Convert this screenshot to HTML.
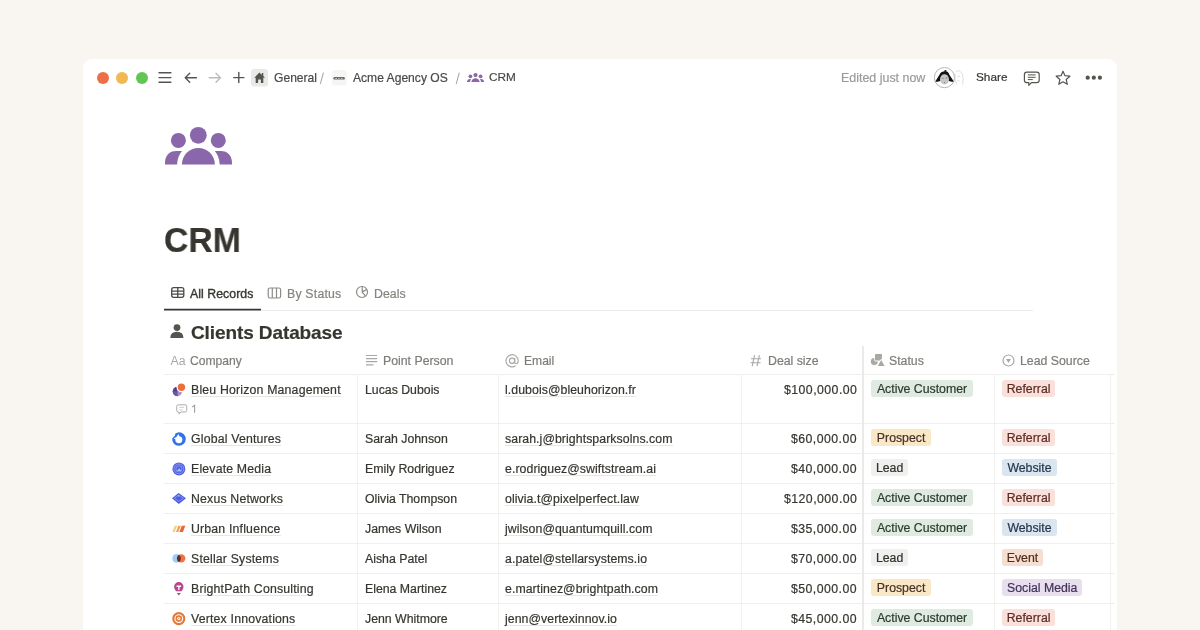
<!DOCTYPE html>
<html><head><meta charset="utf-8">
<style>
*{box-sizing:border-box}
html,body{margin:0;padding:0}
body{width:1200px;height:630px;overflow:hidden;position:relative;background:#F9F6F1;font-family:"Liberation Sans",sans-serif;color:#37352F}
.abs{position:absolute}
.win{position:absolute;left:83px;top:59px;width:1034px;height:620px;background:#fff;border-radius:9px}
.t{position:absolute;white-space:nowrap;line-height:1;will-change:transform;-webkit-text-stroke:0.2px currentColor}
.dot{position:absolute;width:12px;height:12px;border-radius:50%}
.hl{position:absolute;height:1px;background:#EFEFEE}
.vl{position:absolute;width:1px;background:#F1F1F0}
.cell{position:absolute;font-size:12.3px;white-space:nowrap;line-height:1;color:#37352F}
.co{display:inline-block;height:14px;background:linear-gradient(#E6E6E4,#E6E6E4) no-repeat 0 11.6px/100% 1px}
.tag{position:absolute;height:17px;border-radius:3px;font-size:12.3px;line-height:19px;padding:0;text-align:center;white-space:nowrap;will-change:transform;letter-spacing:0px;-webkit-text-stroke:0.2px currentColor}
.g{background:#DFEBE0;color:#2C3A30}
.y{background:#F8E8C6;color:#47302A}
.n{background:#F0F0EE;color:#32302C}
.r{background:#F9E0DB;color:#5A2A22}
.b{background:#D9E6F0;color:#26364A}
.o{background:#F6DFD0;color:#4D2E1F}
.p{background:#E8DFEE;color:#40315A}
.hd{position:absolute;font-size:12.3px;color:#7D7C78;white-space:nowrap;line-height:1}
</style></head><body>
<div class="win"></div>

<!-- traffic lights -->
<div class="dot" style="left:97px;top:72px;background:#EC6F48"></div>
<div class="dot" style="left:116px;top:72px;background:#F1B854"></div>
<div class="dot" style="left:135.5px;top:72px;background:#62C654"></div>

<!-- nav icons -->
<svg class="abs" style="left:0;top:0" width="1200" height="100" viewBox="0 0 1200 100">
  <g stroke="#55544F" stroke-width="1.4" fill="none" stroke-linecap="round">
    <path d="M159 72.7H170.9M159 77.6H170.9M159 82.25H170.9"/>
    <path d="M196.4 77.7H185.6M189.7 73.2L185.3 77.7L189.7 82.3"/>
  </g>
  <g stroke="#BDBCB8" stroke-width="1.4" fill="none" stroke-linecap="round">
    <path d="M209.2 77.7H220.1M216 73.2L220.4 77.7L216 82.3"/>
  </g>
  <g stroke="#55544F" stroke-width="1.4" fill="none" stroke-linecap="round">
    <path d="M238.8 72.5V82.6M233.7 77.6H243.9"/>
  </g>
  <rect x="251" y="69" width="17" height="17.5" rx="3" fill="#E9E9E7"/>
  <path d="M259.4 72.6L254.3 77.7H255.7V82.9H258.1V79.4H260.9V82.9H263.3V77.7H264.9L263.3 76.1V73.1H261.8V74.9Z" fill="#55544F"/>
  <rect x="331.8" y="69.9" width="15" height="15.5" rx="3.5" fill="#F5F5F4"/>
  <g fill="#3A3936"><rect x="333.4" y="77" width="11.4" height="2.6" rx="1.2" opacity="0.75"/></g>
  <g fill="#fff"><rect x="335.6" y="77.9" width="1" height="1"/><rect x="338.4" y="77.9" width="1" height="1"/><rect x="341.3" y="77.9" width="1" height="1"/></g>
</svg>

<div class="t" style="left:274px;top:72.3px;font-size:12.1px;color:#4A4945">General</div>
<div class="t" style="left:352.8px;top:72.3px;font-size:12.1px;color:#4A4945">Acme Agency OS</div>
<svg class="abs" style="left:0;top:60px" width="480" height="30" viewBox="0 60 480 30"><path d="M323.3 73L320.4 83.6M459.2 73L456.3 83.6" stroke="#ABAAA6" stroke-width="1.05" stroke-linecap="round"/></svg>
<svg class="abs" style="left:466.7px;top:72.9px" width="17.3" height="9.4" viewBox="0 0 68 37.4" preserveAspectRatio="none">
  <g fill="#8A67AB">
  <circle cx="33.4" cy="8.3" r="8.3"/><circle cx="13.5" cy="13.4" r="7.4"/><circle cx="53.4" cy="13.4" r="7.4"/>
  <path d="M17 37.4A16.5 16.5 0 0 1 50 37.4Z"/>
  <path d="M0 37.4Q0 24 12 24H16Q12 30 12 37.4Z"/>
  <path d="M67 37.4Q67 24 55 24H51Q55 30 55 37.4Z"/>
  </g>
</svg>
<div class="t" style="left:488.8px;top:72.1px;font-size:11.8px;color:#4A4945">CRM</div>

<div class="t" style="left:841px;top:72px;font-size:12.45px;color:#9B9A97">Edited just now</div>
<!-- avatars -->
<svg class="abs" style="left:920px;top:60px" width="60" height="34" viewBox="920 60 60 34">
  <circle cx="958.5" cy="77.6" r="9.4" fill="#fff"/>
  <path d="M955.8 71.2Q959.8 69.6 962.3 73.5Q963.8 78 962.6 84.5M955.2 73.5Q953.8 78 956.8 84.5M957.2 76.8Q958.6 75.8 960 76.8M957.6 80.8H959.6" fill="none" stroke="#DADAD8" stroke-width="0.9"/>
  <circle cx="944.4" cy="77.6" r="10.1" fill="#fff" stroke="#A3A3A0" stroke-width="0.8"/>
  <path d="M945.3 71.2Q948.3 71.3 949.2 74.4Q951.6 78 953.8 81.5Q951 82.1 948.6 80.8L940.4 80.8Q938 82.1 935.3 81.4Q937.4 78 939.6 74.4Q941 71.2 945.3 71.2Z" fill="#121212"/>
  <circle cx="945.4" cy="71" r="1.1" fill="#121212"/>
  <ellipse cx="944.5" cy="79.4" rx="4.5" ry="5.1" fill="#C6C6C4"/>
  <path d="M942.2 78.3H943.6M945.7 78H947.2M944 82.3Q944.6 82.8 945.2 82.3" stroke="#666" stroke-width="0.8" fill="none"/>
</svg>
<div class="t" style="left:976.2px;top:72.4px;font-size:11.8px;color:#37352F">Share</div>
<svg class="abs" style="left:1020px;top:66px" width="90" height="24" viewBox="1020 66 90 24">
  <g fill="none" stroke="#55544F" stroke-width="1.2" stroke-linejoin="round">
    <path d="M1026.8 72.1H1036.8Q1039.2 72.1 1039.2 74.5V80.2Q1039.2 82.6 1036.8 82.6H1031.4L1028.8 85.3V82.6H1026.8Q1024.4 82.6 1024.4 80.2V74.5Q1024.4 72.1 1026.8 72.1Z"/>
    <path d="M1027.8 74.9H1035.6M1027.8 77.3H1035.6M1027.8 79.6H1032.8" stroke-width="1"/>
    <path d="M1063 71.2L1065 75.7L1069.9 76.2L1066.2 79.5L1067.3 84.3L1063 81.8L1058.8 84.3L1059.9 79.5L1056.2 76.2L1061.1 75.7Z"/>
  </g>
  <g fill="#55544F"><circle cx="1087.7" cy="77.7" r="2.1"/><circle cx="1093.8" cy="77.7" r="2.1"/><circle cx="1099.9" cy="77.7" r="2.1"/></g>
</svg>

<!-- big page icon -->
<svg class="abs" style="left:164px;top:126px" width="69" height="40" viewBox="164 126 69 40">
  <defs><mask id="m1"><rect x="164" y="126" width="69" height="40" fill="#fff"/><circle cx="198.4" cy="164.6" r="21.3" fill="#000"/></mask></defs>
  <g fill="#8A67AB">
    <circle cx="198.3" cy="135.3" r="8.4"/>
    <circle cx="178.4" cy="140.4" r="7.5"/>
    <circle cx="218.3" cy="140.4" r="7.5"/>
    <path d="M181.9 164.5A16.5 16.5 0 0 1 214.9 164.5Z"/>
    <g mask="url(#m1)">
      <path d="M164.9 164.5Q164.9 151 176.5 151H190V164.5Z"/>
      <path d="M232.1 164.5Q232.1 151 220.5 151H207V164.5Z"/>
    </g>
  </g>
</svg>

<div class="t" style="left:164px;top:223.2px;font-size:34.6px;font-weight:bold;color:#37352F;transform:scaleX(0.975);transform-origin:0 0">CRM</div>

<!-- tabs -->
<svg class="abs" style="left:160px;top:280px" width="260" height="24" viewBox="160 280 260 24">
  <g fill="none" stroke="#4A4945" stroke-width="1.3">
    <rect x="171.7" y="287.7" width="12.1" height="9.6" rx="2"/>
    <path d="M177.75 287.7V297.3M171.7 291.1H183.8M171.7 294.2H183.8"/>
  </g>
  <g fill="none" stroke="#8C8B87" stroke-width="1.2">
    <rect x="268.2" y="288" width="12.4" height="10" rx="1.8"/>
    <path d="M272.3 288V298M276.5 288V298"/>
    <circle cx="362" cy="292" r="5.5"/>
    <path d="M362.2 286.6V292.2L365.4 295.8M362.6 291.6L366.6 289.6"/>
  </g>
</svg>
<div class="t" style="left:189.8px;top:288px;font-size:12.3px;color:#37352F;letter-spacing:0.05px;-webkit-text-stroke:0.35px currentColor">All Records</div>
<div class="t" style="left:287px;top:287.6px;font-size:12.3px;color:#85847F;letter-spacing:0.2px">By Status</div>
<div class="t" style="left:374px;top:287.6px;font-size:12.3px;color:#85847F;letter-spacing:0.05px">Deals</div>
<svg class="abs" style="left:160px;top:305px" width="110" height="10" viewBox="160 305 110 10"><path d="M164 309.6H261" stroke="#37352F" stroke-width="1.6"/></svg>
<div class="abs" style="left:261px;top:310px;width:772px;height:1px;background:#EBEBEA"></div>

<!-- Clients Database heading -->
<svg class="abs" style="left:168px;top:322px" width="18" height="18" viewBox="168 322 18 18">
  <g fill="#55544F"><circle cx="177" cy="327.6" r="3.4"/><path d="M170.3 338.1Q170.3 331.8 177 331.8Q183.4 331.8 183.4 338.1Z"/></g>
</svg>
<div class="t" style="left:191.2px;top:322.8px;font-size:19px;font-weight:bold;color:#37352F;letter-spacing:-0.1px">Clients Database</div>

<!-- table -->
<svg class="abs" style="left:164px;top:376px" width="40" height="254" viewBox="164 376 40 254">
<defs>
<mask id="bh"><rect x="164" y="376" width="30" height="30" fill="#fff"/><circle cx="181.4" cy="387.3" r="4.9" fill="#000"/></mask>
</defs>
<g mask="url(#bh)">
<circle cx="177.4" cy="391.5" r="4.7" fill="#A98FD6"/>
<path d="M177.4 386.8A4.7 4.7 0 0 0 177.4 396.2Z" fill="#5A3E8E"/>
<path d="M172.7 391.5H177.4V396.2A4.7 4.7 0 0 1 172.7 391.5Z" fill="#6D5A9E"/>
</g>
<circle cx="181.4" cy="387.3" r="3.7" fill="#EC6E3C"/>
<path d="M178.9 432.2A6.8 6.8 0 1 1 172.2 438.3L174.6 436.1L175.6 433.2Z" fill="#3071EE"/>
<path d="M178.4 434.1L179.4 436.2A3.5 3.5 0 1 1 175.4 439.2L173.7 438.6L176.4 437.1Z" fill="#fff"/>
<circle cx="178.9" cy="468.9" r="6.5" fill="#5060E2"/>
<circle cx="178.9" cy="468.9" r="4.9" fill="none" stroke="#9AA6F4" stroke-width="0.75"/>
<circle cx="178.9" cy="468.9" r="3.1" fill="none" stroke="#9AA6F4" stroke-width="0.75"/>
<path d="M176.8 471.2L179.2 468.2L181.2 470.8Z" fill="#A8C8F8"/>
<path d="M172 498.3L178.6 493.1L186 498.2L178.8 503.9Z" fill="#4B5DE0"/>
<path d="M174.3 498.2L178.6 495L183.4 498.2L178.8 501.4Z" fill="none" stroke="#97A3F4" stroke-width="0.75"/>
<path d="M177.3 496.3L178.5 494.9L179.9 496.4Z" fill="#A9C5FA"/>
<path d="M172.3 532L174.7 525.7H177.2L174.8 532Z" fill="#F7D08F"/>
<path d="M175.9 532L178.3 525.7H180.8L178.4 532Z" fill="#F2A446"/>
<path d="M179.4 532L181.8 525.7H185.3L182.9 532Z" fill="#E8653A"/>
<circle cx="176.6" cy="558.4" r="4.3" fill="#A0CCF8"/>
<circle cx="181.2" cy="558.4" r="4.2" fill="#EE7445"/>
<path d="M178.9 554.8A4.3 4.3 0 0 1 178.9 562A4.3 4.3 0 0 1 178.9 554.8Z" fill="#6A2A1C"/>
<path d="M178.8 582.1A4.7 4.7 0 0 1 183.5 586.8Q183.5 589.2 181.5 591.2H176.1Q174.1 589.2 174.1 586.8A4.7 4.7 0 0 1 178.8 582.1Z" fill="#B8478E"/>
<path d="M176.6 585.5H181.1V586.9H179.5V590H178.2V586.9H176.6Z" fill="#fff"/>
<path d="M176.7 592.9H180.9L178.8 595.6Z" fill="#B8478E"/>
<circle cx="178.8" cy="618.6" r="5.5" fill="none" stroke="#E07B3C" stroke-width="2.2"/>
<circle cx="178.8" cy="618.6" r="2.5" fill="none" stroke="#E07B3C" stroke-width="1.6"/>
<circle cx="178.8" cy="618.6" r="0.7" fill="#E07B3C"/>
<path d="M178.3 404.8H185.1Q186.7 404.8 186.7 406.4V410.4Q186.7 412 185.1 412H181L179.1 414.1V412H178.3Q176.7 412 176.7 410.4V406.4Q176.7 404.8 178.3 404.8Z" fill="none" stroke="#A5A4A0" stroke-width="0.9"/>
<path d="M179.3 407.3H184.1M179.3 410H182.4" stroke="#BDBCB8" stroke-width="0.8"/>
<path d="M192 407.1L194.6 405.3V412.8" fill="none" stroke="#9C9B97" stroke-width="1.05"/>
</svg>
<div class="t" style="left:189.6px;top:354.96px;font-size:12.1px;color:#7D7C78;">Company</div>
<div class="t" style="left:383.4px;top:354.79px;font-size:12.3px;color:#7D7C78;">Point Person</div>
<div class="t" style="left:523.6px;top:354.96px;font-size:12.1px;color:#7D7C78;">Email</div>
<div class="t" style="left:767.6px;top:354.79px;font-size:12.3px;color:#7D7C78;">Deal size</div>
<div class="t" style="left:889px;top:354.79px;font-size:12.3px;color:#7D7C78;">Status</div>
<div class="t" style="left:1019.7px;top:354.79px;font-size:12.3px;color:#7D7C78;">Lead Source</div>
<svg class="abs" style="left:160px;top:346px" width="960" height="28" viewBox="160 346 960 28">
<text x="170.6" y="365.2" font-family="Liberation Sans" font-size="12.3" fill="#A9A8A4">Aa</text>
<g stroke="#A9A8A4" stroke-width="1.1" fill="none">
<path d="M754.6 355.2L752.2 366.2M759.4 355.2L757 366.2M751 358.8H761M750.6 362.7H760.6"/>
<path d="M366 355.5H377.2M366 358.6H377.2M366 361.7H377.2M366 364.8H373.5" stroke-width="1.2"/>
<circle cx="1008.5" cy="360.5" r="5.5" stroke-width="1.2"/>
<circle cx="512.1" cy="360.8" r="2.6" stroke-width="1.15"/>
<path d="M514.7 358.1V361.9Q514.7 363.7 516.4 363.7Q518.2 363.7 518.2 360.8A6.1 6.1 0 1 0 515.6 365.8" stroke-width="1.15"/>
</g>
<path d="M1006 359.1H1011L1008.5 363Z" fill="#A9A8A4"/>
<g fill="#A9A8A4" stroke="#fff" stroke-width="1.6" style="paint-order:stroke">
<circle cx="874.3" cy="361.6" r="3.5" stroke="none"/>
<rect x="875" y="354.1" width="7" height="6.5" rx="0.6"/>
<path d="M881.2 360.1L884.6 365.9H877.8Z"/>
</g>
</svg>
<div class="hl" style="left:164px;top:374px;width:951px"></div>
<div class="hl" style="left:164px;top:423px;width:951px"></div>
<div class="hl" style="left:164px;top:453px;width:951px"></div>
<div class="hl" style="left:164px;top:483px;width:951px"></div>
<div class="hl" style="left:164px;top:513px;width:951px"></div>
<div class="hl" style="left:164px;top:543px;width:951px"></div>
<div class="hl" style="left:164px;top:573px;width:951px"></div>
<div class="hl" style="left:164px;top:603px;width:951px"></div>
<div class="vl" style="left:357px;top:375px;height:260px"></div>
<div class="vl" style="left:498px;top:375px;height:260px"></div>
<div class="vl" style="left:741px;top:375px;height:260px"></div>
<div class="vl" style="left:994px;top:375px;height:260px"></div>
<div class="vl" style="left:1110px;top:375px;height:260px"></div>
<div class="abs" style="left:862px;top:346px;width:2px;height:290px;background:#EAEAE8"></div>
<div class="t" style="left:191px;top:384.19px;font-size:12.3px;color:#37352F;letter-spacing:0.18px"><span class="co">Bleu Horizon Management</span></div>
<div class="t" style="left:364.7px;top:384.19px;font-size:12.3px;color:#37352F;">Lucas Dubois</div>
<div class="t" style="left:505.1px;top:384.19px;font-size:12.3px;color:#37352F;letter-spacing:0.07px"><span class="co">l.dubois@bleuhorizon.fr</span></div>
<div class="t" style="right:343px;top:384.19px;font-size:12.3px;color:#37352F;letter-spacing:0.45px">$100,000.00</div>
<div class="tag g" style="left:870.7px;top:380.3px;width:102px">Active Customer</div>
<div class="tag r" style="left:1001.8px;top:380.3px;width:53.2px">Referral</div>
<div class="t" style="left:191px;top:433.19px;font-size:12.3px;color:#37352F;letter-spacing:0.18px"><span class="co">Global Ventures</span></div>
<div class="t" style="left:364.7px;top:433.19px;font-size:12.3px;color:#37352F;">Sarah Johnson</div>
<div class="t" style="left:505.1px;top:433.19px;font-size:12.3px;color:#37352F;letter-spacing:0.07px"><span class="co">sarah.j@brightsparksolns.com</span></div>
<div class="t" style="right:343px;top:433.19px;font-size:12.3px;color:#37352F;letter-spacing:0.45px">$60,000.00</div>
<div class="tag y" style="left:870.7px;top:429.3px;width:60.2px">Prospect</div>
<div class="tag r" style="left:1001.8px;top:429.3px;width:53.2px">Referral</div>
<div class="t" style="left:191px;top:463.19px;font-size:12.3px;color:#37352F;letter-spacing:0.18px"><span class="co">Elevate Media</span></div>
<div class="t" style="left:364.7px;top:463.19px;font-size:12.3px;color:#37352F;">Emily Rodriguez</div>
<div class="t" style="left:505.1px;top:463.19px;font-size:12.3px;color:#37352F;letter-spacing:0.07px"><span class="co">e.rodriguez@swiftstream.ai</span></div>
<div class="t" style="right:343px;top:463.19px;font-size:12.3px;color:#37352F;letter-spacing:0.45px">$40,000.00</div>
<div class="tag n" style="left:870.7px;top:459.3px;width:37.2px">Lead</div>
<div class="tag b" style="left:1001.8px;top:459.3px;width:55px">Website</div>
<div class="t" style="left:191px;top:493.19px;font-size:12.3px;color:#37352F;letter-spacing:0.18px"><span class="co">Nexus Networks</span></div>
<div class="t" style="left:364.7px;top:493.19px;font-size:12.3px;color:#37352F;">Olivia Thompson</div>
<div class="t" style="left:505.1px;top:493.19px;font-size:12.3px;color:#37352F;letter-spacing:0.07px"><span class="co">olivia.t@pixelperfect.law</span></div>
<div class="t" style="right:343px;top:493.19px;font-size:12.3px;color:#37352F;letter-spacing:0.45px">$120,000.00</div>
<div class="tag g" style="left:870.7px;top:489.3px;width:102px">Active Customer</div>
<div class="tag r" style="left:1001.8px;top:489.3px;width:53.2px">Referral</div>
<div class="t" style="left:191px;top:523.19px;font-size:12.3px;color:#37352F;letter-spacing:0.18px"><span class="co">Urban Influence</span></div>
<div class="t" style="left:364.7px;top:523.19px;font-size:12.3px;color:#37352F;">James Wilson</div>
<div class="t" style="left:505.1px;top:523.19px;font-size:12.3px;color:#37352F;letter-spacing:0.07px"><span class="co">jwilson@quantumquill.com</span></div>
<div class="t" style="right:343px;top:523.19px;font-size:12.3px;color:#37352F;letter-spacing:0.45px">$35,000.00</div>
<div class="tag g" style="left:870.7px;top:519.3px;width:102px">Active Customer</div>
<div class="tag b" style="left:1001.8px;top:519.3px;width:55px">Website</div>
<div class="t" style="left:191px;top:552.69px;font-size:12.3px;color:#37352F;letter-spacing:0.18px"><span class="co">Stellar Systems</span></div>
<div class="t" style="left:364.7px;top:552.69px;font-size:12.3px;color:#37352F;">Aisha Patel</div>
<div class="t" style="left:505.1px;top:552.69px;font-size:12.3px;color:#37352F;letter-spacing:0.07px"><span class="co">a.patel@stellarsystems.io</span></div>
<div class="t" style="right:343px;top:552.69px;font-size:12.3px;color:#37352F;letter-spacing:0.45px">$70,000.00</div>
<div class="tag n" style="left:870.7px;top:549.3px;width:37.2px">Lead</div>
<div class="tag o" style="left:1001.8px;top:549.3px;width:41px">Event</div>
<div class="t" style="left:191px;top:582.69px;font-size:12.3px;color:#37352F;letter-spacing:0.18px"><span class="co">BrightPath Consulting</span></div>
<div class="t" style="left:364.7px;top:582.69px;font-size:12.3px;color:#37352F;">Elena Martinez</div>
<div class="t" style="left:505.1px;top:582.69px;font-size:12.3px;color:#37352F;letter-spacing:0.07px"><span class="co">e.martinez@brightpath.com</span></div>
<div class="t" style="right:343px;top:582.69px;font-size:12.3px;color:#37352F;letter-spacing:0.45px">$50,000.00</div>
<div class="tag y" style="left:870.7px;top:579.3px;width:60.2px">Prospect</div>
<div class="tag p" style="left:1001.8px;top:579.3px;width:80.4px">Social Media</div>
<div class="t" style="left:191px;top:612.69px;font-size:12.3px;color:#37352F;letter-spacing:0.18px"><span class="co">Vertex Innovations</span></div>
<div class="t" style="left:364.7px;top:612.69px;font-size:12.3px;color:#37352F;">Jenn Whitmore</div>
<div class="t" style="left:505.1px;top:612.69px;font-size:12.3px;color:#37352F;letter-spacing:0.07px"><span class="co">jenn@vertexinnov.io</span></div>
<div class="t" style="right:343px;top:612.69px;font-size:12.3px;color:#37352F;letter-spacing:0.45px">$45,000.00</div>
<div class="tag g" style="left:870.7px;top:609.3px;width:102px">Active Customer</div>
<div class="tag r" style="left:1001.8px;top:609.3px;width:53.2px">Referral</div>
</body></html>
